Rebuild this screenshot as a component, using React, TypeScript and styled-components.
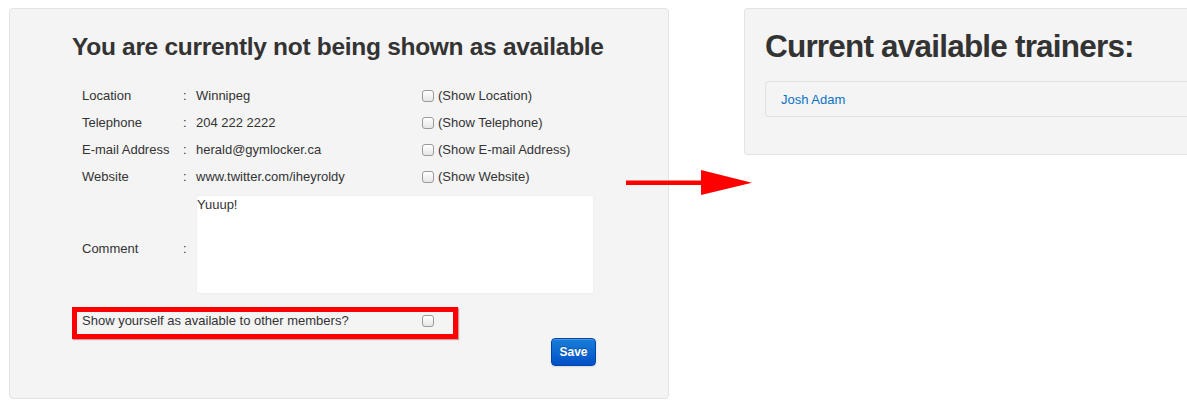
import React from "react";
import styled, { createGlobalStyle } from "styled-components";

const Global = createGlobalStyle`
  html, body { margin: 0; padding: 0; background: #fff; }
  body { font-family: "Liberation Sans", Arial, Helvetica, sans-serif; color: #333; font-size: 13px; }
`;

const Page = styled.div`
  position: relative;
  width: 1187px;
  height: 405px;
  overflow: hidden;
  display: flex;
  align-items: flex-start;
  gap: 75px;
  padding: 8px 0 0 9px;
  box-sizing: border-box;
`;

const Panel = styled.div<{ $width: number; $height: number }>`
  flex: none;
  box-sizing: border-box;
  width: ${(p) => p.$width}px;
  height: ${(p) => p.$height}px;
  background: #f4f4f4;
  border: 1px solid #e3e3e3;
  border-radius: 4px;
`;

const LeftPanel = styled(Panel)`
  padding: 23px 72px 0 62px;
  display: flex;
  flex-direction: column;
`;

const RightPanel = styled(Panel)`
  padding: 17px 0 0 20px;
  border-right: none;
  border-radius: 4px 0 0 4px;
`;

const Title = styled.h3`
  margin: 0 0 20px 0;
  font-size: 24.5px;
  letter-spacing: -0.3px;
  line-height: 30px;
  font-weight: bold;
  color: #333;
  white-space: nowrap;
`;

const BigTitle = styled.h2`
  margin: 0 0 15px 0;
  font-size: 31.5px;
  letter-spacing: -0.8px;
  line-height: 40px;
  font-weight: bold;
  color: #333;
  white-space: nowrap;
`;

const Grid = styled.div`
  display: grid;
  grid-template-columns: 101px 13px 226px auto;
  padding-left: 10px;
  align-items: center;
`;

const Cell = styled.div<{ $h?: number; $offset?: number }>`
  box-sizing: border-box;
  height: ${(p) => p.$h ?? 27}px;
  padding-top: ${(p) => p.$offset ?? 0}px;
  display: flex;
  align-items: center;
  line-height: 16px;
  white-space: nowrap;
`;

const Check = styled.input.attrs({ type: "checkbox" })`
  appearance: none;
  -webkit-appearance: none;
  box-sizing: border-box;
  width: 12px;
  height: 12px;
  margin: 0 4px 0 0;
  border: 1px solid #9a9a9a;
  border-radius: 3px;
  background: linear-gradient(#ffffff, #e6e6e6);
  box-shadow: inset 0 1px 0 #fff;
  flex: none;
`;

const Comment = styled.textarea`
  box-sizing: border-box;
  width: 398px;
  height: 99px;
  margin: 0;
  padding: 1px 0 0 0;
  border: 1px solid #f0f0f0;
  border-radius: 3px;
  background: #fff;
  resize: none;
  font-family: "Liberation Sans", Arial, sans-serif;
  font-size: 13px;
  line-height: 16px;
  color: #333;
  outline: none;
`;

const CommentCell = styled(Cell)`
  margin-top: 5px;
  grid-column: 3 / span 2;
`;

const Highlight = styled.div`
  box-sizing: border-box;
  width: 386px;
  height: 32px;
  margin-top: 13px;
  border: 5px solid #ff0000;
  padding: 0 0 5px 5px;
  display: flex;
  align-items: center;
  box-shadow: 1px 1px 1px rgba(120, 0, 0, 0.35);
`;

const HighlightLabel = styled.span`
  width: 340px;
  flex: none;
`;

const Actions = styled.div`
  display: flex;
  justify-content: flex-end;
  margin-top: -1px;
`;

const SaveButton = styled.button`
  box-sizing: border-box;
  width: 45px;
  height: 28px;
  border: 1px solid #0044aa;
  border-radius: 4px;
  background: linear-gradient(#1a7fd8, #0050c8);
  color: #fff;
  font-family: "Liberation Sans", Arial, sans-serif;
  font-weight: bold;
  font-size: 12px;
  text-shadow: 0 -1px 0 rgba(0, 0, 0, 0.25);
  box-shadow: inset 0 1px 0 rgba(255, 255, 255, 0.2), 0 1px 2px rgba(0, 0, 0, 0.1);
  padding: 0;
`;

const TrainerBox = styled.div`
  box-sizing: border-box;
  height: 36px;
  margin-right: -10px;
  border: 1px solid #e0e0e0;
  border-right: none;
  border-radius: 4px 0 0 4px;
  background: #f4f4f4;
  padding: 0 15px;
  display: flex;
  align-items: center;
`;

const TrainerLink = styled.a`
  color: #0a72c6;
  text-decoration: none;
  font-size: 13px;
`;

const Arrow = styled.svg`
  position: absolute;
  left: 626px;
  top: 170px;
`;

const fields = [
  { label: "Location", value: "Winnipeg" },
  { label: "Telephone", value: "204 222 2222" },
  { label: "E-mail Address", value: "herald@gymlocker.ca" },
  { label: "Website", value: "www.twitter.com/iheyroldy" },
];

export default function App() {
  return (
    <>
      <Global />
      <Page>
        <LeftPanel $width={660} $height={391}>
          <Title>You are currently not being shown as available</Title>
          <Grid>
            {fields.map((f) => (
              <React.Fragment key={f.label}>
                <Cell>{f.label}</Cell>
                <Cell>:</Cell>
                <Cell>{f.value}</Cell>
                <Cell>
                  <Check />
                  (Show {f.label})
                </Cell>
              </React.Fragment>
            ))}
            <Cell $h={104} $offset={14}>Comment</Cell>
            <Cell $h={104} $offset={14}>:</Cell>
            <CommentCell $h={99}>
              <Comment defaultValue="Yuuup!" />
            </CommentCell>
          </Grid>
          <Highlight>
            <HighlightLabel>Show yourself as available to other members?</HighlightLabel>
            <Check />
          </Highlight>
          <Actions>
            <SaveButton>Save</SaveButton>
          </Actions>
        </LeftPanel>
        <RightPanel $width={460} $height={147}>
          <BigTitle>Current available trainers:</BigTitle>
          <TrainerBox>
            <TrainerLink href="#">Josh Adam</TrainerLink>
          </TrainerBox>
        </RightPanel>
        <Arrow width="127" height="26" viewBox="0 0 127 26">
          <rect x="0" y="10.5" width="77" height="4.5" fill="#ff0000" />
          <polygon points="75,0 126,12.7 75,25" fill="#ff0000" />
        </Arrow>
      </Page>
    </>
  );
}
